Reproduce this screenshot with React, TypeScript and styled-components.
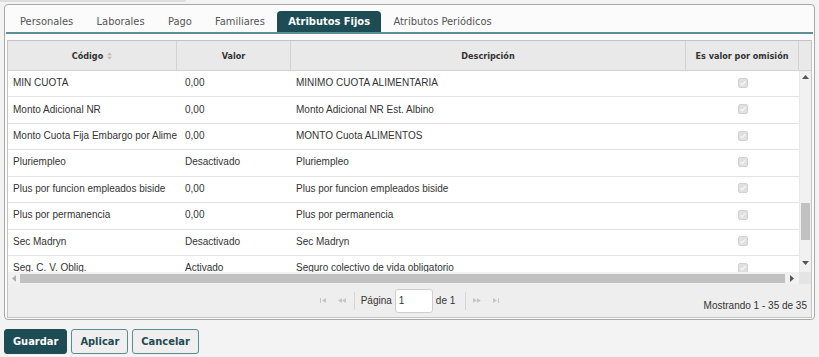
import React from 'react';
import styled, { createGlobalStyle } from 'styled-components';

const UI = `"DejaVu Sans Condensed", "DejaVu Sans", Verdana, sans-serif`;
const BODY = `"Liberation Sans", Arial, sans-serif`;

const GlobalStyle = createGlobalStyle`
  html, body { margin: 0; padding: 0; background: #f3f3f3; }
  body { width: 819px; height: 357px; overflow: hidden; }
  * { box-sizing: border-box; }
`;

const Page = styled.div`
  width: 819px;
  height: 357px;
  display: flex;
  flex-direction: column;
`;

const TopStrip = styled.div`
  width: 186px;
  height: 2px;
  background: #dedede;
`;

const Panel = styled.div`
  margin: 2px 4px 0;
  border: 1px solid #a8a8a8;
  border-radius: 4px;
  background: #fbfbfb;
  padding: 6px 0 1px;
  display: flex;
  flex-direction: column;
`;

const TabBar = styled.div`
  display: flex;
  gap: 1.3px;
  margin: 0 1px;
  padding-left: 3px;
  border-bottom: 2px solid #5e8f94;
`;

const Tab = styled.div<{ $active?: boolean }>`
  height: 21px;
  padding: 0 11px;
  display: flex;
  align-items: center;
  font-family: ${UI};
  font-size: 11px;
  font-weight: ${(p) => (p.$active ? 700 : 400)};
  color: ${(p) => (p.$active ? '#ffffff' : '#555555')};
  background: ${(p) => (p.$active ? '#1d4c55' : 'transparent')};
  border-radius: 4px 4px 0 0;
  white-space: nowrap;
`;

const Grid = styled.div`
  margin: 6px 2px 0;
  border: 1px solid #c4c4c4;
  display: flex;
  flex-direction: column;
  background: #ffffff;
`;

const HeaderRow = styled.div`
  display: flex;
  height: 30px;
  background: #e9e9e9;
  border-bottom: 1px solid #d2d2d2;
`;

const HeadCell = styled.div<{ $w: number; $last?: boolean }>`
  width: ${(p) => p.$w}px;
  flex: none;
  display: flex;
  align-items: center;
  justify-content: center;
  border-right: ${(p) => (p.$last ? 'none' : '1px solid #d2d2d2')};
  font-family: ${UI};
  font-size: 9px;
  font-weight: 700;
  color: #333333;
  white-space: nowrap;
`;

const SortIcon = styled.svg`
  margin-left: 4px;
`;

const Body = styled.div`
  display: flex;
  height: 201px;
`;

const Rows = styled.div`
  width: 791px;
  flex: none;
  overflow: hidden;
  display: flex;
  flex-direction: column;
`;

const Row = styled.div`
  display: flex;
  flex: none;
  align-items: center;
  height: 26.43px;
  padding-bottom: 2px;
  border-bottom: 1px solid #e3e3e3;
`;

const Cell = styled.div<{ $w: number; $pad?: number; $center?: boolean }>`
  width: ${(p) => p.$w}px;
  flex: none;
  padding-left: ${(p) => p.$pad ?? 0}px;
  display: flex;
  justify-content: ${(p) => (p.$center ? 'center' : 'flex-start')};
  overflow: hidden;
  white-space: nowrap;
  font-family: ${BODY};
  font-size: 10px;
  color: #333333;
`;

const VScroll = styled.div`
  width: 12px;
  flex: none;
  background: #f1f1f1;
  border-left: 1px solid #e8e8e8;
  display: flex;
  flex-direction: column;
  align-items: center;
`;

const ArrowBox = styled.div<{ $w: number; $h: number }>`
  width: ${(p) => p.$w}px;
  height: ${(p) => p.$h}px;
  flex: none;
  display: flex;
  align-items: center;
  justify-content: center;
`;

const VThumb = styled.div<{ $top: number }>`
  margin-top: ${(p) => p.$top}px;
  width: 9px;
  height: 37px;
  background: #c1c1c1;
`;

const Spacer = styled.div`
  flex: 1;
`;

const HScroll = styled.div`
  display: flex;
  height: 12px;
`;

const HTrack = styled.div`
  width: 791px;
  flex: none;
  background: #f1f1f1;
  display: flex;
  align-items: center;
`;

const HThumb = styled.div`
  flex: 1;
  height: 9px;
  background: #c1c1c1;
`;

const Corner = styled.div`
  flex: 1;
  background: #e4e4e4;
`;

const Pager = styled.div`
  height: 33px;
  background: #eeeeee;
  display: grid;
  grid-template-columns: 1fr auto 1fr;
  align-items: center;
  font-family: ${BODY};
  font-size: 10px;
  color: #333333;
`;

const PagerGroup = styled.div`
  grid-column: 2;
  display: flex;
  align-items: center;
`;

const PagerBtn = styled.div`
  width: 19px;
  height: 18px;
  display: flex;
  align-items: center;
  justify-content: center;
`;

const Sep = styled.div<{ $ml: number; $mr: number }>`
  width: 1px;
  height: 18px;
  background: #d6d6d6;
  margin: 0 ${(p) => p.$mr}px 0 ${(p) => p.$ml}px;
`;

const PageInput = styled.div`
  width: 38px;
  height: 24px;
  margin: 0 3px 0 3px;
  background: #ffffff;
  border: 1px solid #cfcfcf;
  border-radius: 3px;
  display: flex;
  align-items: center;
  padding-left: 3px;
`;

const Info = styled.div`
  grid-column: 3;
  justify-self: end;
  align-self: end;
  padding: 0 4px 5px 0;
  line-height: 12px;
  white-space: nowrap;
`;

const Actions = styled.div`
  display: flex;
  gap: 4px;
  margin: 9px 0 0 4px;
`;

const Button = styled.button<{ $primary?: boolean }>`
  height: 25px;
  padding: 0 8px;
  border-radius: 3px;
  border: 1px solid ${(p) => (p.$primary ? '#1d4c55' : '#5b8a90')};
  background: ${(p) => (p.$primary ? '#1d4c55' : '#efefef')};
  color: ${(p) => (p.$primary ? '#ffffff' : '#1f4a52')};
  font-family: ${UI};
  font-size: 11px;
  font-weight: 700;
  cursor: pointer;
`;

const COLS = [169, 114, 395, 113];
const PADS = [5, 8, 5];

const rows: [string, string, string][] = [
  ['MIN CUOTA', '0,00', 'MINIMO CUOTA ALIMENTARIA'],
  ['Monto Adicional NR', '0,00', 'Monto Adicional NR Est. Albino'],
  ['Monto Cuota Fija Embargo por Alime', '0,00', 'MONTO Cuota ALIMENTOS'],
  ['Pluriempleo', 'Desactivado', 'Pluriempleo'],
  ['Plus por funcion empleados biside', '0,00', 'Plus por funcion empleados biside'],
  ['Plus por permanencia', '0,00', 'Plus por permanencia'],
  ['Sec Madryn', 'Desactivado', 'Sec Madryn'],
  ['Seg. C. V. Oblig.', 'Activado', 'Seguro colectivo de vida obligatorio'],
];

const tabs = ['Personales', 'Laborales', 'Pago', 'Familiares', 'Atributos Fijos', 'Atributos Periódicos'];

const Check = () => (
  <svg width="10" height="10" viewBox="0 0 10 10">
    <rect x="0.5" y="0.5" width="9" height="9" rx="1.5" fill="#e0e0e0" stroke="#d2d2d2" />
    <path d="M2.6 5.2 L4.2 6.8 L7.4 3.2" fill="none" stroke="#f6f6f6" strokeWidth="1.3" />
  </svg>
);

const Tri = ({ dir, color }: { dir: 'up' | 'down' | 'left' | 'right'; color: string }) => {
  const pts = {
    up: '0,4 3.5,0 7,4',
    down: '0,0 7,0 3.5,4',
    left: '4,0 4,7 0,3.5',
    right: '0,0 0,7 4,3.5',
  }[dir];
  const horiz = dir === 'left' || dir === 'right';
  return (
    <svg width={horiz ? 4 : 7} height={horiz ? 7 : 4} viewBox={horiz ? '0 0 4 7' : '0 0 7 4'}>
      <polygon points={pts} fill={color} />
    </svg>
  );
};

const SeekIcon = ({ kind }: { kind: 'first' | 'prev' | 'next' | 'last' }) => {
  const c = '#c6c6c6';
  return (
    <svg width="8" height="5" viewBox="0 0 8 5">
      {kind === 'first' && (
        <>
          <rect x="1" y="0" width="1" height="5" fill={c} />
          <polygon points="7,0 7,5 3,2.5" fill={c} />
        </>
      )}
      {kind === 'prev' && (
        <>
          <polygon points="4,0 4,5 0,2.5" fill={c} />
          <polygon points="8,0 8,5 4,2.5" fill={c} />
        </>
      )}
      {kind === 'next' && (
        <>
          <polygon points="0,0 0,5 4,2.5" fill={c} />
          <polygon points="4,0 4,5 8,2.5" fill={c} />
        </>
      )}
      {kind === 'last' && (
        <>
          <polygon points="1,0 1,5 5,2.5" fill={c} />
          <rect x="6" y="0" width="1" height="5" fill={c} />
        </>
      )}
    </svg>
  );
};

export default function App() {
  return (
    <>
      <GlobalStyle />
      <Page>
        <TopStrip />
        <Panel>
          <TabBar>
            {tabs.map((t) => (
              <Tab key={t} $active={t === 'Atributos Fijos'}>
                {t}
              </Tab>
            ))}
          </TabBar>
          <Grid>
            <HeaderRow>
              <HeadCell $w={COLS[0]}>
                Código
                <SortIcon width="5" height="8" viewBox="0 0 5 8">
                  <polygon points="0,3.3 2.5,0.5 5,3.3" fill="#bdbdbd" />
                  <polygon points="0,4.7 5,4.7 2.5,7.5" fill="#bdbdbd" />
                </SortIcon>
              </HeadCell>
              <HeadCell $w={COLS[1]}>Valor</HeadCell>
              <HeadCell $w={COLS[2]}>Descripción</HeadCell>
              <HeadCell $w={COLS[3]}>Es valor por omisión</HeadCell>
              <HeadCell $w={12} $last />
            </HeaderRow>
            <Body>
              <Rows>
                {rows.map((r, i) => (
                  <Row key={i}>
                    {r.map((v, j) => (
                      <Cell key={j} $w={COLS[j]} $pad={PADS[j]}>
                        {v}
                      </Cell>
                    ))}
                    <Cell $w={COLS[3]} $center>
                      <Check />
                    </Cell>
                  </Row>
                ))}
              </Rows>
              <VScroll>
                <ArrowBox $w={12} $h={12}>
                  <Tri dir="up" color="#555" />
                </ArrowBox>
                <VThumb $top={120} />
                <Spacer />
                <ArrowBox $w={12} $h={12}>
                  <Tri dir="down" color="#555" />
                </ArrowBox>
                <ArrowBox $w={12} $h={3} />
              </VScroll>
            </Body>
            <HScroll>
              <HTrack>
                <ArrowBox $w={12} $h={12}>
                  <Tri dir="left" color="#b0b0b0" />
                </ArrowBox>
                <HThumb />
                <ArrowBox $w={14} $h={12}>
                  <Tri dir="right" color="#555" />
                </ArrowBox>
              </HTrack>
              <Corner />
            </HScroll>
            <Pager>
              <PagerGroup>
                <PagerBtn>
                  <SeekIcon kind="first" />
                </PagerBtn>
                <PagerBtn>
                  <SeekIcon kind="prev" />
                </PagerBtn>
                <Sep $ml={2} $mr={6} />
                <span>Página</span>
                <PageInput>1</PageInput>
                <span>de 1</span>
                <Sep $ml={10} $mr={1} />
                <PagerBtn>
                  <SeekIcon kind="next" />
                </PagerBtn>
                <PagerBtn>
                  <SeekIcon kind="last" />
                </PagerBtn>
              </PagerGroup>
              <Info>Mostrando 1 - 35 de 35</Info>
            </Pager>
          </Grid>
        </Panel>
        <Actions>
          <Button $primary>Guardar</Button>
          <Button>Aplicar</Button>
          <Button>Cancelar</Button>
        </Actions>
      </Page>
    </>
  );
}
